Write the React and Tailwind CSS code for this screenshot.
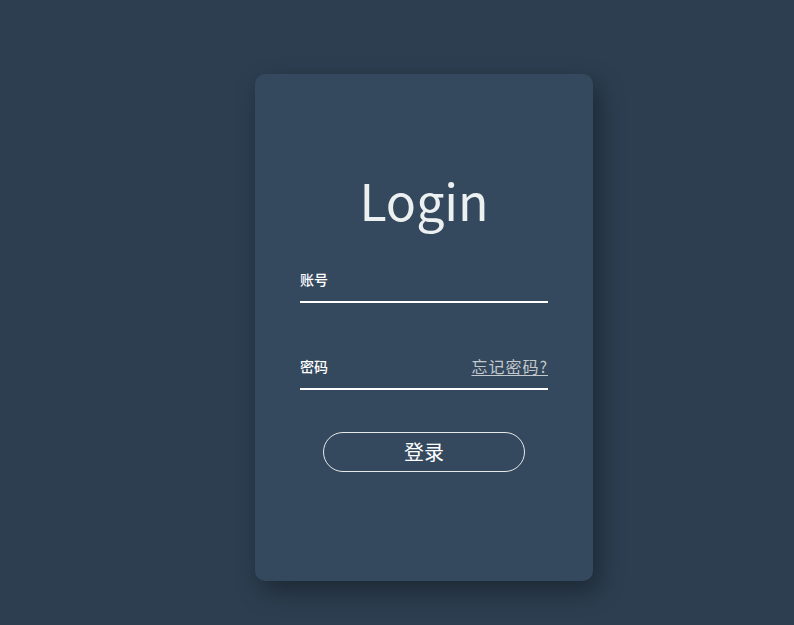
import React from "react";

const font = { fontFamily: '"Noto Sans CJK SC", "Noto Sans", sans-serif' };

const App = () => {
  return (
    <div
      className="min-h-screen w-full bg-[#2c3e50] pl-[255px] pt-[74px]"
      style={font}
    >
      {/* Login card */}
      <div className="flex h-[507px] w-[338px] flex-col rounded-[10px] bg-[#34495e] px-[45px] pt-[100px] shadow-[6px_10px_24px_rgba(0,0,0,0.35)]">
        <h1 className="text-center text-[50px] leading-[50px] font-normal text-[#ecf0f1]">
          Login
        </h1>

        <div className="mt-[45px] border-b-2 border-white pb-[12px]">
          <label className="block text-[14px] leading-[20px] font-medium text-white">
            账号
          </label>
        </div>

        <div className="mt-[53px] flex items-end justify-between border-b-2 border-white pb-[12px]">
          <label className="text-[14px] leading-[20px] font-medium text-white">
            密码
          </label>
          <a
            href="#"
            className="text-[16px] leading-[20px] tracking-[1px] text-[#c3c8cc] underline underline-offset-2"
          >
            忘记密码?
          </a>
        </div>

        <button className="mx-auto mt-[42px] h-10 w-[202px] rounded-full border border-[#e6e9ec] text-[20px] leading-[20px] text-white">
          登录
        </button>
      </div>
    </div>
  );
};

export default App;
